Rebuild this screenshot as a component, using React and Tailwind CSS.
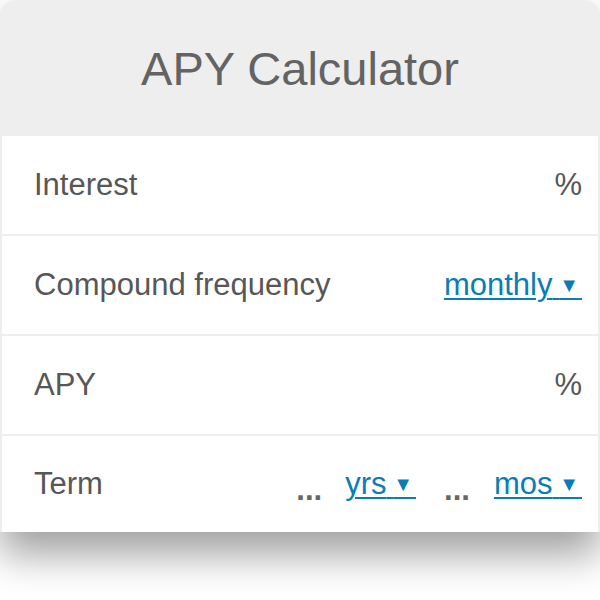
export default function App() {
  const Caret = () => (
    <>
      <span className="text-[24px]">{"\u00a0"}</span>
      <span className="text-[20px] align-[3px]">▼</span>
      <span className="text-[11px]">{"\u00a0"}</span>
    </>
  );

  const Dots = () => (
    <span className="font-bold text-[#666] translate-y-[6px] inline-block">...</span>
  );

  return (
    <div className="w-[600px] h-[600px] bg-white font-['Liberation_Sans',Arial,sans-serif]">
      <div className="rounded-t-2xl bg-[#eeeeee] shadow-[0_22px_40px_rgba(0,0,0,0.38)]">
        {/* Header */}
        <div className="h-[136px] flex items-center justify-center">
          <h1 className="text-[47px] text-[#636363] leading-none">APY Calculator</h1>
        </div>

        {/* Rows */}
        <div className="flex flex-col gap-[2px] px-[2px] text-[31px] text-[#575757]">
          <div className="h-[98px] bg-white flex items-center justify-between pl-8 pr-4">
            <span>Interest</span>
            <span>%</span>
          </div>

          <div className="h-[98px] bg-white flex items-center justify-between pl-8 pr-4">
            <span>Compound frequency</span>
            <span className="text-[#0a7db5] underline decoration-[2px] underline-offset-[3px]">
              monthly
              <Caret />
            </span>
          </div>

          <div className="h-[98px] bg-white flex items-center justify-between pl-8 pr-4">
            <span>APY</span>
            <span>%</span>
          </div>

          <div className="h-[96px] bg-white flex items-center justify-between pl-8 pr-4">
            <span>Term</span>
            <div className="flex items-center">
              <Dots />
              <span className="ml-[23px] text-[#0a7db5] underline decoration-[2px] underline-offset-[3px]">
                yrs
                <Caret />
              </span>
              <span className="ml-[28px]">
                <Dots />
              </span>
              <span className="ml-[24px] text-[#0a7db5] underline decoration-[2px] underline-offset-[3px]">
                mos
                <Caret />
              </span>
            </div>
          </div>
        </div>
      </div>
    </div>
  );
}
